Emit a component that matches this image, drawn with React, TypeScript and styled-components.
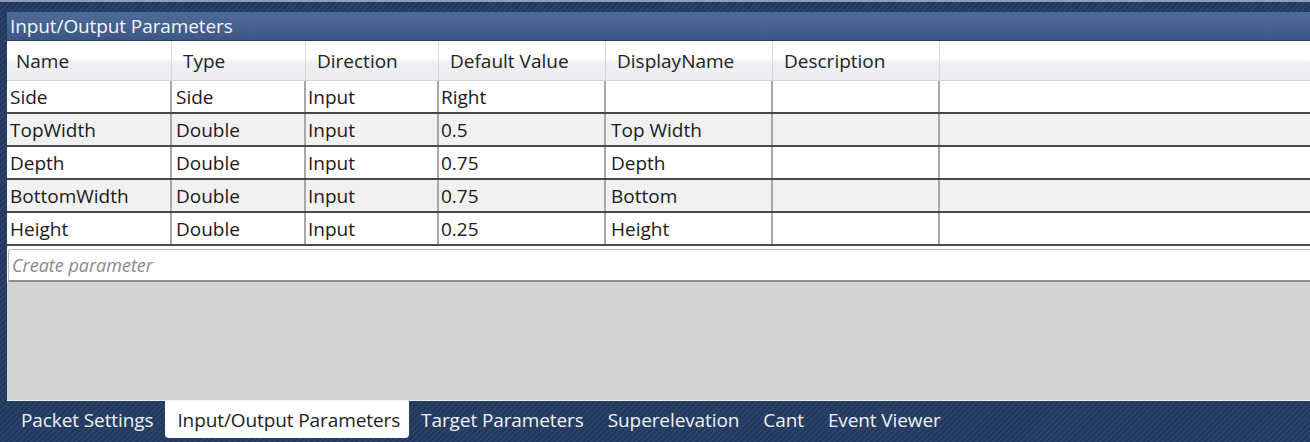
import React from "react";
import styled, { createGlobalStyle } from "styled-components";

const hatch = `repeating-linear-gradient(
  135deg,
  #22385c 0px,
  #22385c 2px,
  #2b4369 2px,
  #2b4369 4px
)`;

const GlobalStyle = createGlobalStyle`
  html, body {
    margin: 0;
    padding: 0;
    overflow: hidden;
    background: #22385c;
  }
  body {
    font-family: "Open Sans", "Noto Sans", sans-serif;
  }
`;

// Outer window frame
const Frame = styled.div`
  width: 1310px;
  height: 442px;
  display: flex;
  flex-direction: column;
  background: ${hatch};
  border-top: 2px solid #8e9cb4;
  box-sizing: border-box;
`;

const Panel = styled.div`
  margin: 10px 0 0 7px;
  display: flex;
  flex-direction: column;
  flex: 1;
`;

const TitleBar = styled.div`
  height: 28px;
  display: flex;
  align-items: center;
  padding-left: 3px;
  background: linear-gradient(to bottom, #4f6c98, #3c5784);
  border-bottom: 1px solid #2a3f62;
  color: #f4f6fa;
  font-size: 19px;
  letter-spacing: -0.1px;
`;

const Grid = styled.div`
  background: #ffffff;
  display: flex;
  flex-direction: column;
`;

const Row = styled.div<{ $alt?: boolean }>`
  display: flex;
  height: 33px;
  box-sizing: border-box;
  border-bottom: 2px solid #4a4a4a;
  background: ${(p) => (p.$alt ? "#f1f1f1" : "#ffffff")};
`;

const HeaderRow = styled.div`
  display: flex;
  height: 40px;
  box-sizing: border-box;
  background: linear-gradient(to bottom, #ffffff 0%, #ffffff 45%, #eef0f2 55%, #eceef1 100%);
  border-bottom: 1px solid #d0d0d0;
`;

const HeaderCell = styled.div<{ $w: number; $first?: boolean }>`
  width: ${(p) => p.$w}px;
  flex: none;
  box-sizing: border-box;
  display: flex;
  align-items: center;
  padding-left: ${(p) => (p.$first ? 9 : 11)}px;
  border-right: 1px solid #dadada;
  color: #222;
  font-size: 19px;
`;

const Cell = styled.div<{ $w: number; $pad: number }>`
  width: ${(p) => p.$w}px;
  flex: none;
  box-sizing: border-box;
  display: flex;
  align-items: center;
  padding-left: ${(p) => p.$pad}px;
  padding-top: 1px;
  border-right: 2px solid #a8a8a8;
  color: #1a1a1a;
  font-size: 19px;
`;

const Filler = styled.div`
  flex: 1;
`;

const Spacer = styled.div`
  height: 3px;
  background: #ffffff;
`;

const CreateRow = styled.div`
  height: 33px;
  margin-left: 1px;
  box-sizing: border-box;
  display: flex;
  align-items: center;
  padding-left: 3px;
  background: #ffffff;
  border: 1px solid #b9b9b9;
  border-bottom: 2px solid #8d8d8d;
  border-right: none;
  border-radius: 3px 0 0 0;
  color: #8a8a8a;
  font-style: italic;
  font-size: 18px;
`;

const EmptyArea = styled.div`
  flex: 1;
  background: #d3d3d3;
  border-bottom: 1px solid #eef0f3;
`;

const TabStrip = styled.div`
  height: 41px;
  display: flex;
  align-items: flex-start;
  margin-left: -7px;
  padding-left: 9px;
  background: ${hatch};
`;

const Tab = styled.div<{ $active?: boolean }>`
  height: 37px;
  display: flex;
  align-items: center;
  padding: ${(p) => (p.$active ? "0 9px 0 12px" : "0 12px")};
  font-size: 19px;
  letter-spacing: -0.1px;
  color: ${(p) => (p.$active ? "#1d1d1d" : "#eef2f8")};
  background: ${(p) => (p.$active ? "#ffffff" : "transparent")};
  border-radius: 0 0 4px 4px;
`;

const columns = [
  { title: "Name", w: 165, pad: 3 },
  { title: "Type", w: 134, pad: 4 },
  { title: "Direction", w: 133, pad: 2 },
  { title: "Default Value", w: 167, pad: 2 },
  { title: "DisplayName", w: 167, pad: 5 },
  { title: "Description", w: 167, pad: 4 },
];

const rows = [
  ["Side", "Side", "Input", "Right", "", ""],
  ["TopWidth", "Double", "Input", "0.5", "Top Width", ""],
  ["Depth", "Double", "Input", "0.75", "Depth", ""],
  ["BottomWidth", "Double", "Input", "0.75", "Bottom", ""],
  ["Height", "Double", "Input", "0.25", "Height", ""],
];

const tabs = [
  "Packet Settings",
  "Input/Output Parameters",
  "Target Parameters",
  "Superelevation",
  "Cant",
  "Event Viewer",
];

export default function App() {
  return (
    <>
      <GlobalStyle />
      <Frame>
        <Panel>
          <TitleBar>Input/Output Parameters</TitleBar>
          <Grid>
            <HeaderRow>
              {columns.map((c, i) => (
                <HeaderCell key={c.title} $w={c.w} $first={i === 0}>
                  {c.title}
                </HeaderCell>
              ))}
              <Filler />
            </HeaderRow>
            {rows.map((r, ri) => (
              <Row key={r[0]} $alt={ri % 2 === 1}>
                {r.map((v, ci) => (
                  <Cell key={ci} $w={columns[ci].w} $pad={columns[ci].pad}>
                    {v}
                  </Cell>
                ))}
                <Filler />
              </Row>
            ))}
            <Spacer />
            <CreateRow>Create parameter</CreateRow>
          </Grid>
          <EmptyArea />
          <TabStrip>
            {tabs.map((t) => (
              <Tab key={t} $active={t === "Input/Output Parameters"}>
                {t}
              </Tab>
            ))}
          </TabStrip>
        </Panel>
      </Frame>
    </>
  );
}
